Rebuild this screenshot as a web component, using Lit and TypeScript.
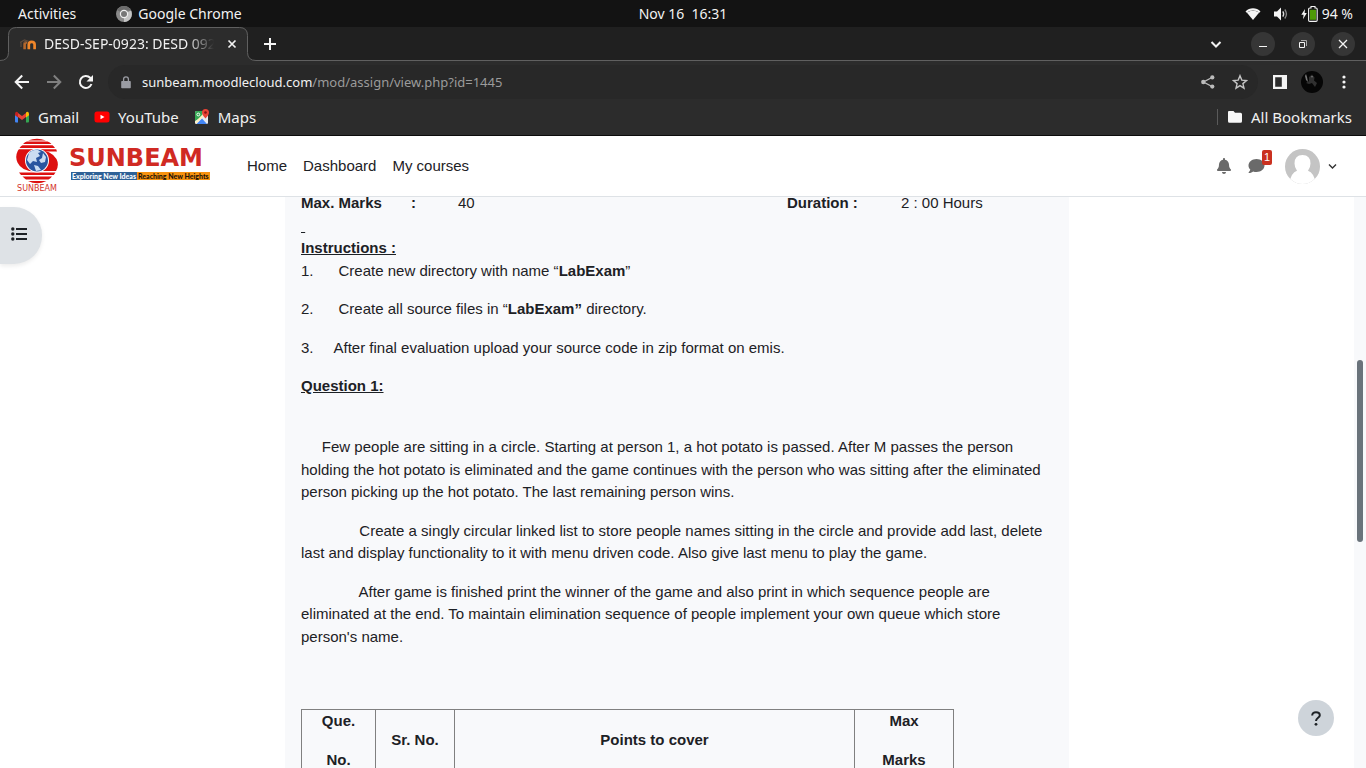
import { LitElement, html, css } from "lit";
import { customElement } from "lit/decorators.js";

const NB = "\u00a0";

@customElement("desktop-bar")
class DesktopBar extends LitElement {
  static styles = css`
    :host { display: grid; grid-template-columns: 1fr auto 1fr; align-items: center; height: 27px; background: #131313; color: #f2f2f2; font: 14px/20px "Noto Sans", sans-serif; padding: 0 13px; }
    .group { display: flex; align-items: center; }
    .end { justify-content: flex-end; }
    button { font: inherit; color: inherit; background: none; border: 0; padding: 0; display: flex; align-items: center; gap: 6px; }
    .apps { gap: 40px; padding-left: 5px; }
    .tray { gap: 12px; }
    .battery { gap: 4px; }
    svg { display: block; }
  `;
  render() {
    return html`
      <div class="group apps">
        <button>Activities</button>
        <button>
          <svg width="16" height="16" viewBox="0 0 16 16"><circle cx="8" cy="8" r="8" fill="#8a8a8a"/><path d="M8 8 15 4.500A8 8 0 0 1 8 16Z" fill="#c4c4c4"/><path d="M8 8 1 4A8 8 0 0 1 15 4.500L8 4.500Z" fill="#6c6c6c"/><circle cx="8" cy="8" r="4.200" fill="#efefef"/><circle cx="8" cy="8" r="3" fill="#777"/></svg>
          Google Chrome
        </button>
      </div>
      <button>Nov 16${NB} 16:31</button>
      <div class="group end tray">
        <svg width="16" height="14" viewBox="0 0 16 14"><path d="M.500 4.500C4.500.200 11.500.200 15.500 4.500L14.300 5.800C10.500 2.600 5.500 2.600 1.700 5.800Z" fill="#f5f5f5"/><path d="M1.800 5.600C5.500 3 10.500 3 14.200 5.600L8 13Z" fill="#f5f5f5"/></svg>
        <svg width="16" height="14" viewBox="0 0 16 14"><path d="M1 4.500h3L8 .500v13L4 9.500H1Z" fill="#f5f5f5"/><path d="M9.800 4.300q1.800 2.700 0 5.400" fill="none" stroke="#ddd" stroke-width="1.300"/><path d="M11.800 2.500q3.300 4.500 0 9" fill="none" stroke="#888" stroke-width="1.300"/></svg>
        <div class="group battery">
          <svg width="17" height="16" viewBox="0 0 17 16"><path d="M4 3 .300 8.700h2.300L2 13.200 5.800 7H3.600Z" fill="#f5f5f5"/><path d="M10 .500h4v1.500h1q1.200 0 1.200 1.200v11q0 1.200-1.200 1.200H8.800q-1.200 0-1.200-1.200v-11Q7.600 2 8.800 2H10Z" fill="none" stroke="#f5f5f5" stroke-width="1.100"/><path d="M9 3.800h6v10H9Z" fill="#4e9a06"/></svg>
          <span>94${NB}%</span>
        </div>
      </div>`;
  }
}

@customElement("browser-chrome")
class BrowserChrome extends LitElement {
  static styles = css`
    :host { display: block; background: #2c2c2c; color: #f1f1f1; font: 14px/20px "Noto Sans", sans-serif; border-bottom: 1px solid #0c0c0c; }
    svg { display: block; flex: none; }
    button, a { font: inherit; color: inherit; background: none; border: 0; padding: 0; text-decoration: none; display: flex; align-items: center; justify-content: center; }
    .strip { display: flex; height: 34px; background: #202020; }
    .tab { position: relative; width: 256px; flex: none; box-sizing: border-box; display: flex; align-items: center; padding: 0 16px 0 20px; }
    .shape { position: absolute; left: 0; top: 0; }
    .label { position: relative; flex: 1; display: flex; align-items: center; gap: 8px; min-width: 0; }
    .title { width: 170px; overflow: hidden; white-space: nowrap; mask-image: linear-gradient(90deg, #000 84%, transparent); }
    .x { position: relative; }
    .rest { flex: 1; display: flex; align-items: center; justify-content: space-between; border-bottom: 1px solid #606060; padding: 0 11px 0 6px; }
    .win { display: flex; align-items: center; gap: 16px; }
    .win button { width: 24px; height: 24px; border-radius: 50%; background: #363636; }
    .win .search { background: none; margin-right: 7px; }
    .tools { display: flex; align-items: center; height: 42px; padding: 0 12px; }
    .nav { display: flex; width: 96px; gap: 12px; }
    .nav button { width: 20px; height: 20px; }
    .omni { flex: 1; display: flex; align-items: center; height: 34px; border-radius: 17px; background: #282828; padding: 0 10px 0 13px; gap: 11px; }
    .field { flex: 1; color: #9b9b9b; font-size: 13px; }
    .field b { font-weight: 400; color: #f1f1f1; }
    .side { display: flex; align-items: center; gap: 10px; padding-left: 12px; }
    .marks { display: flex; align-items: center; justify-content: space-between; height: 28px; padding: 0 14px 4px; font-size: 15px; }
    .list { display: flex; gap: 15px; }
    .marks a, .marks button { gap: 8px; }
    .all { display: flex; align-items: center; gap: 9px; }
    .rule { width: 1px; height: 16px; background: #5a5a5a; }
    .dim { gap: 16px; display: flex; }
  `;
  render() {
    return html`
      <div class="strip">
        <div class="tab">
          <svg class="shape" width="256" height="34" viewBox="0 0 256 34"><path d="M0 33.500q8.500 0 8.500-8V8.500q0-8 8-8H239.500q8 0 8 8v17q0 8 8.500 8V34H0Z" fill="#2c2c2c"/><path d="M0 33.500q8.500 0 8.500-8V8.500q0-8 8-8H239.500q8 0 8 8v17q0 8 8.500 8" fill="none" stroke="#606060"/></svg>
          <div class="label">
            <svg width="16" height="16" viewBox="0 0 16 16" fill="none"><path d="M8.800 13.200V8.500q0-2.600 2.900-2.600t2.900 2.600v4.700" stroke="#f0862a" stroke-width="2.700"/><path d="M4.600 13.200V8.500q0-2.300 2.600-2.600" stroke="#b5672c" stroke-width="2.600"/><path d="M0 6.500 4.500 4l3 1-3.800 1.500M1 6.500v4.500" stroke="#5e4a3c" stroke-width="1.200"/></svg>
            <span class="title">DESD-SEP-0923: DESD 0923</span>
          </div>
          <button class="x" aria-label="Close tab"><svg width="16" height="16" viewBox="0 0 16 16"><path d="M4.500 4.500l7 7M11.500 4.500l-7 7" stroke="#f1f1f1" stroke-width="1.700"/></svg></button>
        </div>
        <div class="rest">
          <button aria-label="New tab"><svg width="16" height="16" viewBox="0 0 16 16"><path d="M8 2v12M2 8h12" stroke="#f5f5f5" stroke-width="2"/></svg></button>
          <div class="win">
            <button class="search" aria-label="Search tabs"><svg width="12" height="12" viewBox="0 0 12 12"><path d="M1.500 4 6 8.500 10.500 4" fill="none" stroke="#f1f1f1" stroke-width="2"/></svg></button>
            <button aria-label="Minimize"><svg width="12" height="12" viewBox="0 0 12 12"><path d="M2 8.500h8" stroke="#f5f5f5"/></svg></button>
            <button aria-label="Restore"><svg width="12" height="12" viewBox="0 0 12 12" fill="none"><path d="M2.500 4.500h5v5h-5Z" stroke="#f5f5f5"/><path d="M4 2.500h5.500V8" stroke="#aaa"/></svg></button>
            <button aria-label="Close"><svg width="12" height="12" viewBox="0 0 12 12"><path d="M2 2l8 8M10 2l-8 8" stroke="#f5f5f5" stroke-width="1.300"/></svg></button>
          </div>
        </div>
      </div>
      <div class="tools">
        <div class="nav">
          <button aria-label="Back"><svg width="16" height="16" viewBox="0 0 16 16"><path d="M15 8H2M8.200 1.500 1.700 8l6.500 6.500" fill="none" stroke="#f5f5f5" stroke-width="2"/></svg></button>
          <button aria-label="Forward"><svg width="16" height="16" viewBox="0 0 16 16"><path d="M1 8h13M7.800 1.500 14.300 8l-6.500 6.500" fill="none" stroke="#808080" stroke-width="2"/></svg></button>
          <button aria-label="Reload"><svg width="16" height="16" viewBox="0 0 16 16"><path d="M13.500 10A6 6 0 1 1 12.200 3.800L14 5.500" fill="none" stroke="#f5f5f5" stroke-width="2"/><path d="M15 1v6.500H8.500Z" fill="#f5f5f5"/></svg></button>
        </div>
        <div class="omni">
          <svg width="10" height="13" viewBox="0 0 10 13"><path d="M1 5h8q.800 0 .800.800v5.700q0 .800-.800.800H1q-.800 0-.800-.800V5.800Q.200 5 1 5Z" fill="#9a9ca3"/><path d="M2.600 5V3.300a2.400 2.400 0 0 1 4.800 0V5" fill="none" stroke="#9a9ca3" stroke-width="1.300"/></svg>
          <div class="field" role="textbox" aria-label="Address" contenteditable="plaintext-only"><b>sunbeam.moodlecloud.com</b>/mod/assign/view.php?id=1445</div>
          <div class="dim">
            <button aria-label="Share"><svg width="16" height="16" viewBox="0 0 16 16" fill="#bcbcbc"><path d="M12 3.500 3.500 8l8.500 4.500" fill="none" stroke="#bcbcbc" stroke-width="1.400"/><circle cx="12.300" cy="3.400" r="2.100"/><circle cx="3.300" cy="8" r="2.200"/><circle cx="12.300" cy="12.600" r="2.100"/></svg></button>
            <button aria-label="Bookmark"><svg width="16" height="16" viewBox="0 0 16 16"><path d="M8 1.700l1.800 4.400 4.700.400-3.600 3.100 1.100 4.600L8 11.700l-4 2.500 1.100-4.600L1.500 6.500l4.700-.400Z" fill="none" stroke="#c4c4c4" stroke-width="1.400"/></svg></button>
          </div>
        </div>
        <div class="side">
          <button aria-label="Side panel"><svg width="20" height="16" viewBox="0 0 20 16"><path d="M3 1h14v14H3ZM5.200 3.200v9.600h6.600V3.200Z" fill="#f5f5f5" fill-rule="evenodd"/></svg></button>
          <button aria-label="Profile"><svg width="24" height="22" viewBox="0 0 24 22"><circle cx="12" cy="11" r="11" fill="#060606"/><path d="M9 6l3-2.500 2.500 3-.500 3L17 12l-2 4-3-4-3 1-3-1 3-2Z" fill="#303030"/><path d="M5 5l1-2 1 3 1 5-2-2ZM11 5h2l-1 2Z" fill="#777"/></svg></button>
          <button aria-label="Menu"><svg width="20" height="16" viewBox="0 0 20 16" fill="#f5f5f5"><circle cx="10" cy="3" r="1.600"/><circle cx="10" cy="8" r="1.600"/><circle cx="10" cy="13" r="1.600"/></svg></button>
        </div>
      </div>
      <div class="marks">
        <div class="list">
          <a href="#"><svg width="16" height="12" viewBox="0 0 16 12"><path d="M1 3v7.500q0 1 1 1h2V4Z" fill="#4285f4"/><path d="M12 4v7.500h2q1 0 1-1V3Z" fill="#34a853"/><path d="M4 2v4l4 3 4-3V2L8 5Z" fill="#ea4335"/><path d="M1 2.500Q1.500 0 3.500 1L4 1.500v5L1 4.300Z" fill="#c5221f"/><path d="M15 2.500Q14.500 0 12.500 1l-.500.500v5l3-2.200Z" fill="#fbbc04"/></svg>Gmail</a>
          <a href="#"><svg width="16" height="12" viewBox="0 0 16 12"><rect x=".500" y=".500" width="15" height="11" rx="2.500" fill="#f00"/><path d="M6.500 3.700v4.600l4-2.300Z" fill="#fff"/></svg>YouTube</a>
          <a href="#"><svg width="16" height="16" viewBox="0 0 16 16"><rect x="1" y="2" width="13" height="13" rx="1.500" fill="#e8eaed"/><path d="M1 12V3.500Q1 2 2.500 2H9L8 8Z" fill="#34a853"/><path d="M2.500 15 8 9.500 13 15Z" fill="#4285f4"/><path d="M1 13 8.500 5.500l1.500 1.500L2 15Z" fill="#fdf0c0"/><path d="M11.500 0a3.500 3.500 0 0 1 3.500 3.500q0 2.300-3.500 6-3.500-3.700-3.500-6A3.500 3.500 0 0 1 11.500 0Z" fill="#ea4335"/><circle cx="11.500" cy="3.500" r="1.300" fill="#811411"/><circle cx="4.300" cy="5.500" r="1.400" fill="none" stroke="#fff"/></svg>Maps</a>
        </div>
        <div class="all"><span class="rule"></span><button><svg width="16" height="14" viewBox="0 0 16 14"><path d="M2 1h4.500L8 2.800h5.500q1.500 0 1.500 1.500v7q0 1.500-1.500 1.500h-11Q1 12.800 1 11.300V2Q1 1 2 1Z" fill="#f7f7f7"/></svg>All Bookmarks</button></div>
      </div>`;
  }
}

@customElement("site-header")
class SiteHeader extends LitElement {
  static styles = css`
    :host { display: flex; align-items: center; justify-content: space-between; height: 60px; padding: 0 29px 0 15px; background: #fff; border-bottom: 1px solid #dee2e6; position: relative; z-index: 1; font: 15px/22px "Liberation Sans", Arial, sans-serif; color: #1d2125; }
    svg { display: block; }
    a { color: inherit; text-decoration: none; }
    .start { display: flex; align-items: center; }
    .brand { display: flex; gap: 10px; width: 232px; }
    .mark { display: flex; flex-direction: column; align-items: center; width: 44px; font: 8px/10px "DejaVu Sans", sans-serif; color: #d3332b; }
    .words { padding-top: 6px; }
    .name { font: 700 24px/28px "DejaVu Sans", sans-serif; color: #d02a23; }
    .tag { display: flex; font: 900 7px/8px Lato, sans-serif; white-space: nowrap; margin-left: 2px; }
    .ideas { background: #2e6196; color: #fff; padding: 0 1px; }
    .heights { background: #f7920f; color: #1b1208; padding: 0 1px; }
    nav { display: flex; gap: 16px; }
    .user { display: flex; align-items: center; }
    button { border: 0; background: none; padding: 0; font: inherit; display: flex; align-items: center; }
    .bell { margin-right: 16px; }
    .chat { position: relative; margin-right: 20px; }
    .count { position: absolute; left: 14px; top: -8px; width: 10px; height: 15px; border-radius: 2px; background: #ca3120; color: #fff; font-size: 11px; line-height: 15px; text-align: center; }
    .me { gap: 8px; }
  `;
  render() {
    return html`
      <div class="start">
        <a class="brand" href="#">
          <span class="mark">
            <svg width="44" height="46" viewBox="0 0 44 46">
              <g fill="#dd1010"><path d="M13 2.500Q22-1 31 2.500ZM8 6Q10 4 12 3.600H32.500Q35 4.500 36.500 6ZM4.500 10Q6 7.800 7.500 7.200H37.500Q39 8.300 40 10Z"/><path d="M2.500 13.500Q3 12 4 11.200H41.200L42 13.500H20Q12 15 12.500 24q1.500 7 8 9.500-14 0-18-9-2.500-6 0-11Z"/><path d="M22 12q14 0 19.500 9 3 6-.500 12H19Q29 31 31 24q1-8-9-12ZM4 34.500H40.500L38.800 37H6ZM7.500 38.500H37Q35.500 40.300 33.500 41.500H11Q9 40 7.500 38.500ZM13 43H31.500Q22 47.500 13 43Z"/></g>
              <circle cx="22" cy="22.500" r="12" fill="#fff"/><circle cx="22" cy="22.500" r="11" fill="#2a55a0"/><path d="M14 15q4-4 9-3l3 2-3 1 2 3-4 2 1 4-4-1-3 3-3-4Zm14 0 3 4-1 5-4 1-2-3 3-2Zm-9 12 4 1 3 4-5 1Z" fill="#cbdcf2"/>
            </svg>
            SUNBEAM
          </span>
          <span class="words"><div class="name">SUNBEAM</div><div class="tag"><span class="ideas">Exploring New Ideas</span><span class="heights">Reaching New Heights</span></div></span>
        </a>
        <nav><a href="#">Home</a><a href="#">Dashboard</a><a href="#">My courses</a></nav>
      </div>
      <div class="user">
        <button class="bell" aria-label="Notifications"><svg width="16" height="16" viewBox="0 0 448 512" fill="#6a6a6a"><path d="M224 512c35.320 0 63.970-28.650 63.970-64H160.030c0 35.350 28.650 64 63.970 64zm215.390-149.710c-19.320-20.760-55.470-51.990-55.470-154.290 0-77.700-54.480-139.900-127.940-155.160V32c0-17.670-14.320-32-31.980-32s-31.980 14.330-31.980 32v20.840C118.560 68.100 64.080 130.300 64.080 208c0 102.300-36.150 133.530-55.470 154.290-6 6.450-8.660 14.160-8.610 21.710.11 16.400 12.980 32 32.100 32h383.800c19.120 0 32-15.600 32.100-32 .05-7.550-2.610-15.270-8.610-21.710z"/></svg></button>
        <button class="chat" aria-label="Messages"><svg width="17" height="16" viewBox="0 0 512 512" fill="#6a6a6a"><path d="M256 32C114.600 32 0 125.100 0 240c0 49.600 21.400 95 57 130.700C44.500 421.100 2.700 466 2.200 466.500c-2.200 2.300-2.800 5.700-1.500 8.700S4.800 480 8 480c66.300 0 116-31.800 140.600-51.400 32.700 12.300 69 19.400 107.400 19.400 141.400 0 256-93.100 256-208S397.400 32 256 32z"/></svg><span class="count">1</span></button>
        <button class="me" aria-label="User menu">
          <svg width="35" height="35" viewBox="0 0 35 35"><defs><clipPath id="c"><circle cx="17.500" cy="17.500" r="17.500"/></clipPath></defs><g clip-path="url(#c)"><path d="M0 0h35v35H0Z" fill="#c4c4c4"/><path d="M17.500 6q8 0 8 8.500 0 4-2.500 7.200 6 1.800 8 13.300H4q2-11.500 8-13.300-2.500-3.200-2.500-7.200 0-8.500 8-8.500Z" fill="#fff"/></g></svg>
          <svg width="9" height="8" viewBox="0 0 9 8"><path d="M1 2.500 4.500 6 8 2.500" fill="none" stroke="#333" stroke-width="1.400"/></svg>
        </button>
      </div>`;
  }
}

@customElement("assignment-page")
class AssignmentPage extends LitElement {
  static styles = css`
    :host { position: relative; display: flex; overflow: hidden; min-height: 0; background: #fff; font: 15px/1.5 "Liberation Sans", Arial, sans-serif; color: #1d2125; }
    .scroll { flex: 1; overflow: hidden; }
    .doc { box-sizing: border-box; max-width: 784px; margin: -5px auto 0; padding: 0 16px; background: #f8f9fb; min-height: 120%; white-space: pre-wrap; }
    p { margin: 0 0 16px; }
    .tight { margin: 0; }
    .facts { display: grid; grid-template-columns: 110px 47px 1fr 114px 152px; }
    table { border-collapse: collapse; table-layout: fixed; width: 653px; white-space: normal; }
    th { border: 1px solid #808080; padding: 0; text-align: center; vertical-align: middle; font-weight: 700; }
    th p:last-child { margin: 0; }
    .que { width: 73px; }
    .sr { width: 78px; }
    .max { width: 98px; }
    .track { width: 12px; background: #f8f9fb; display: grid; grid-template-rows: 28.500% 32%; justify-content: center; }
    .thumb { grid-row: 2; width: 6px; border-radius: 3px; background: #6a737b; }
    button { position: absolute; border: 0; padding: 0; display: flex; align-items: center; }
    .drawer { left: 0; top: 10px; width: 42px; height: 57px; padding: 0 0 3px 11px; border-radius: 0 28px 28px 0; background: #dee2e6; box-shadow: 0 2px 4px rgba(0, 0, 0, 0.08); }
    .help { right: 32px; bottom: 32px; width: 36px; height: 36px; border-radius: 50%; justify-content: center; background: #ced4da; }
  `;
  render() {
    const sp = (n: number) => NB.repeat(n);
    return html`
      <main class="scroll"><article class="doc"
        ><div class="facts"><b>Max. Marks</b><b>:</b><span>40</span><b>Duration :</b><span>2 : 00 Hours</span></div
        ><p class="tight"><u>${NB}</u></p
        ><p class="tight"><b><u>Instructions :</u></b></p
        ><p>1.${sp(6)}Create new directory with name “<b>LabExam</b>”</p
        ><p>2.${sp(6)}Create all source files in “<b>LabExam”</b> directory.</p
        ><p>3.${sp(4)} After final evaluation upload your source code in zip format on emis.</p
        ><p><b><u>Question 1:</u></b></p
        ><p><br>${sp(5)}Few people are sitting in a circle. Starting at person 1, a hot potato is passed. After M passes the person holding the hot potato is eliminated and the game continues with the person who was sitting after the eliminated person picking up the hot potato. The last remaining person wins.</p
        ><p>${sp(14)}Create a singly circular linked list to store people names sitting in the circle and provide add last, delete last and display functionality to it with menu driven code. Also give last menu to play the game.</p
        ><p>${sp(13)} After game is finished print the winner of the game and also print in which sequence people are eliminated at the end. To maintain elimination sequence of people implement your own queue which store person's name.</p
        ><p class="tight">${NB}<br>${NB}</p
        ><table>
          <thead><tr>
            <th class="que" scope="col"><p>Que.</p><p>No.</p></th>
            <th class="sr" scope="col">Sr. No.</th>
            <th scope="col">Points to cover</th>
            <th class="max" scope="col"><p>Max</p><p>Marks</p></th>
          </tr></thead>
        </table></article></main>
      <div class="track"><div class="thumb"></div></div>
      <button class="drawer" aria-label="Open course index"><svg width="16" height="14" viewBox="0 0 16 14"><g fill="#1d2125"><circle cx="1.800" cy="2" r="1.700"/><circle cx="1.800" cy="7" r="1.700"/><circle cx="1.800" cy="12" r="1.700"/></g><path d="M5 2h11M5 7h11M5 12h11" stroke="#1d2125" stroke-width="2"/></svg></button>
      <button class="help" aria-label="Help"><svg width="10" height="15" viewBox="0 0 10 15"><path d="M1.200 4.500C1.200 2.300 2.700 1.200 5 1.200S8.800 2.400 8.800 4.300C8.800 6.900 5 6.700 5 10" fill="none" stroke="#1d2125" stroke-width="2"/><circle cx="5" cy="13.300" r="1.400" fill="#1d2125"/></svg></button>`;
  }
}

@customElement("app-root")
class AppRoot extends LitElement {
  static styles = css`
    :host { display: grid; grid-template-rows: auto auto auto minmax(0, 1fr); height: 100vh; overflow: hidden; }
  `;
  render() {
    return html`<desktop-bar></desktop-bar><browser-chrome></browser-chrome><site-header></site-header><assignment-page></assignment-page>`;
  }
}
